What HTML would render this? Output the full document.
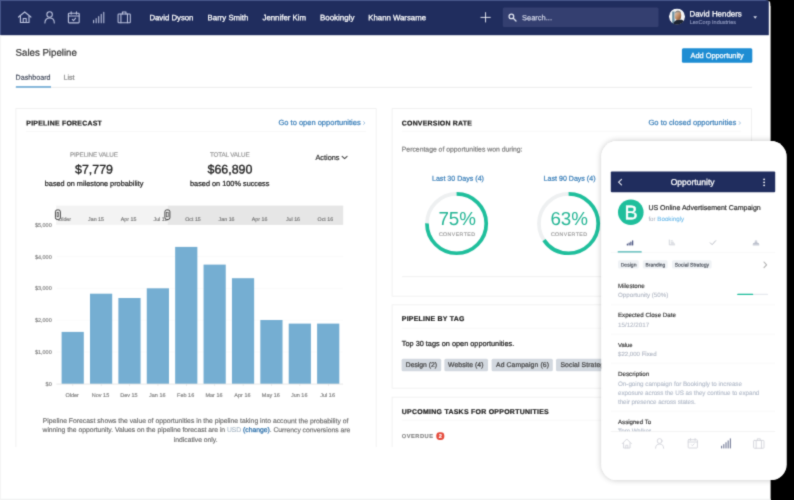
<!DOCTYPE html>
<html lang="en">
<head>
<meta charset="utf-8">
<title>Sales Pipeline</title>
<style>
html,body{margin:0;padding:0;background:#000;}
body{width:794px;height:500px;overflow:hidden;}
svg{display:block;font-family:"Liberation Sans",sans-serif;will-change:transform;}
text{white-space:pre;}
</style>
</head>
<body>
<svg width="794" height="500" viewBox="0 0 794 500" text-rendering="geometricPrecision">
<defs>
<clipPath id="cw"><path d="M-12 -12 H770.6 V512 H-12 Z"/></clipPath>
<filter id="soft" filterUnits="userSpaceOnUse" x="-12" y="-12" width="818" height="524" color-interpolation-filters="sRGB"><feConvolveMatrix order="3" kernelMatrix="1 4 1 4 20 4 1 4 1" divisor="40" edgeMode="duplicate" preserveAlpha="true"/></filter>
<clipPath id="cp"><rect x="601.5" y="141.1" width="185" height="339" rx="15.5"/></clipPath>
<clipPath id="av"><circle cx="677" cy="16.6" r="8.1"/></clipPath>
<linearGradient id="face" x1="0" y1="0" x2="1" y2="1"><stop offset="0" stop-color="#e2d8d0"/><stop offset="0.55" stop-color="#c08a62"/><stop offset="1" stop-color="#6b4630"/></linearGradient>
<filter id="sh" x="-20%" y="-20%" width="140%" height="140%"><feGaussianBlur in="SourceAlpha" stdDeviation="3.4"/><feOffset dy="0.3"/><feComponentTransfer><feFuncA type="linear" slope="0.24"/></feComponentTransfer><feMerge><feMergeNode/><feMergeNode in="SourceGraphic"/></feMerge></filter>
</defs>
<g filter="url(#soft)">
<rect x="-12" y="-12" width="818" height="524" fill="#000"/>
<g clip-path="url(#cw)">
<rect x="-12.00" y="-12.00" width="783.00" height="524.00" fill="#fff" />
<rect x="-12.00" y="-12.00" width="780.80" height="47.20" fill="#202d5e" />
<rect x="-12.00" y="-12.00" width="780.80" height="13.00" fill="#47568a" />
<rect x="-12.00" y="-12.00" width="12.90" height="47.20" fill="#4a598c" />
<g transform="translate(17.70 10.05) scale(1.0)" fill="none" stroke="#b9c0dc" stroke-width="1.15" stroke-linecap="round" stroke-linejoin="round" opacity="1"><path d="M0.8 7 L7 1.9 L13.2 7"/><path d="M2.7 6.2 V12.4 H11.3 V6.2"/><path d="M5.5 12.4 V8.4 H8.5 V12.4"/></g>
<g transform="translate(43.96 10.92) scale(0.94)" fill="none" stroke="#b9c0dc" stroke-width="1.155" stroke-linecap="round" stroke-linejoin="round" opacity="1"><circle cx="6" cy="3.8" r="2.9"/><path d="M1 12.8 C1 9.2 3 7.6 6 7.6 C9 7.6 11 9.2 11 12.8"/></g>
<g transform="translate(67.43 10.93) scale(0.98)" fill="none" stroke="#b9c0dc" stroke-width="1.15" stroke-linecap="round" stroke-linejoin="round" opacity="1"><rect x="1" y="2.4" width="11" height="9.8" rx="0.8"/><path d="M1 5.2 H12"/><path d="M3.8 1 V3.2 M9.2 1 V3.2"/><path d="M5 8.6 L6.2 9.8 L8.4 7.4"/></g>
<g transform="translate(92.50 11.39) scale(0.94)" fill="none" stroke="#b9c0dc" stroke-width="1.15" stroke-linecap="round" stroke-linejoin="round" opacity="1"><path d="M1.2 12 V9.6 M3.9 12 V7.6 M6.6 12 V5.4 M9.3 12 V3.2 M12 12 V1"/></g>
<g transform="translate(117.15 10.92) scale(0.94)" fill="none" stroke="#b9c0dc" stroke-width="1.15" stroke-linecap="round" stroke-linejoin="round" opacity="1"><rect x="1" y="3.2" width="13" height="9.4" rx="0.8"/><path d="M4 3.2 V12.6 M11 3.2 V12.6"/><path d="M5.6 3.2 V1.2 H9.4 V3.2"/></g>
<text x="149.40" y="20.25" transform="rotate(0.03 149.4 20.2)" font-size="7.78" fill="#fff" stroke="#fff" stroke-width="0.25">David Dyson</text>
<text x="207.60" y="20.25" transform="rotate(0.03 207.6 20.2)" font-size="7.81" fill="#fff" stroke="#fff" stroke-width="0.25">Barry Smith</text>
<text x="262.50" y="20.25" transform="rotate(0.03 262.5 20.2)" font-size="7.83" fill="#fff" stroke="#fff" stroke-width="0.25">Jennifer Kim</text>
<text x="320.00" y="20.25" transform="rotate(0.03 320.0 20.2)" font-size="7.93" fill="#fff" stroke="#fff" stroke-width="0.25">Bookingly</text>
<text x="368.30" y="20.25" transform="rotate(0.03 368.3 20.2)" font-size="7.79" fill="#fff" stroke="#fff" stroke-width="0.25">Khann Warsame</text>
<rect x="480.50" y="16.90" width="10.20" height="0.90" fill="#eef0f7" />
<rect x="485.15" y="12.20" width="0.90" height="10.20" fill="#eef0f7" />
<rect x="502.80" y="7.60" width="155.70" height="19.30" rx="1.5" fill="#343f70" />
<g fill="none" stroke="#dfe3f0" stroke-width="1.3" stroke-linecap="round"><circle cx="511.4" cy="16.4" r="2.3"/><path d="M513.3 18.3 L516 21"/></g>
<text x="522.00" y="20.35" transform="rotate(0.03 522.0 20.4)" font-size="7.50" fill="#d3d7e8" stroke="#d3d7e8" stroke-width="0.2">Search...</text>
<g clip-path="url(#av)"><circle cx="677" cy="16.6" r="8.1" fill="#f3f4f6"/><rect x="672.2" y="11.5" width="2.4" height="14" fill="#3f6f86" opacity="0.75"/><ellipse cx="679.4" cy="24.6" rx="6.2" ry="5" fill="#1d2432"/><ellipse cx="677.9" cy="15.6" rx="3.3" ry="4.6" fill="url(#face)"/><path d="M674.9 13.4 C675.2 9.6 680.8 9.6 681.1 13.4 C680 11.9 676 11.9 674.9 13.4Z" fill="#8a8580"/></g>
<text x="689.50" y="16.40" transform="rotate(0.03 689.5 16.4)" font-size="7.91" fill="#fff" stroke="#fff" stroke-width="0.25">David Henders</text>
<text x="689.70" y="24.00" transform="rotate(0.03 689.7 24.0)" font-size="5.52" fill="#8d97bd" stroke="#8d97bd" stroke-width="0.15">LexCorp Industries</text>
<path d="M753.3 16.2 H757.1 L755.2 18.7 Z" fill="#d3d8e8"/>
<text x="15.60" y="55.70" transform="rotate(0.03 15.6 55.7)" font-size="9.66" fill="#3a3a3a" stroke="#3a3a3a" stroke-width="0.22">Sales Pipeline</text>
<text x="15.60" y="79.70" transform="rotate(0.03 15.6 79.7)" font-size="7.15" fill="#3c4456" stroke="#3c4456" stroke-width="0.15">Dashboard</text>
<text x="63.50" y="79.70" transform="rotate(0.03 63.5 79.7)" font-size="7.07" fill="#8a8a8a" stroke="#8a8a8a" stroke-width="0.22">List</text>
<rect x="15.40" y="86.90" width="736.60" height="0.65" fill="#e3e3e3" />
<rect x="15.90" y="86.35" width="35.10" height="1.20" fill="#3f8fca" />
<rect x="681.90" y="48.20" width="70.40" height="14.60" rx="1.5" fill="#1e8dd3" />
<text x="690.50" y="58.00" transform="rotate(0.03 690.5 58.0)" font-size="7.38" fill="#fff" stroke="#fff" stroke-width="0.25">Add Opportunity</text>
<rect x="15.9" y="108.6" width="360.3" height="361.4" fill="#fff" stroke="#eeeeee" stroke-width="0.8"/>
<text x="26.30" y="125.40" transform="rotate(0.03 26.3 125.4)" font-size="6.95" fill="#222" font-weight="700" letter-spacing="0.24" stroke="#222" stroke-width="0.22">PIPELINE FORECAST</text>
<text x="278.50" y="125.00" transform="rotate(0.03 278.5 125.0)" font-size="7.50" fill="#3a7fb9" stroke="#3a7fb9" stroke-width="0.22">Go to open opportunities</text>
<path d="M363.6 121.6 L364.9 123 L363.6 124.4" fill="none" stroke="#8fb6d8" stroke-width="0.8" stroke-linecap="round" stroke-linejoin="round"/>
<rect x="26.00" y="131.40" width="340.00" height="0.60" fill="#f3f3f3" />
<text x="70.00" y="156.70" transform="rotate(0.03 70.0 156.7)" font-size="6.30" fill="#929292" letter-spacing="-0.18" stroke="#929292" stroke-width="0.15">PIPELINE VALUE</text>
<text x="75.00" y="173.60" transform="rotate(0.03 75.0 173.6)" font-size="12.42" fill="#222" stroke="#222" stroke-width="0.32">$7,779</text>
<text x="44.80" y="186.00" transform="rotate(0.03 44.8 186.0)" font-size="7.31" fill="#222" stroke="#222" stroke-width="0.22">based on milestone probability</text>
<text x="210.00" y="156.70" transform="rotate(0.03 210.0 156.7)" font-size="6.30" fill="#929292" letter-spacing="-0.18" stroke="#929292" stroke-width="0.15">TOTAL VALUE</text>
<text x="207.50" y="173.60" transform="rotate(0.03 207.5 173.6)" font-size="12.45" fill="#222" stroke="#222" stroke-width="0.32">$66,890</text>
<text x="190.00" y="186.00" transform="rotate(0.03 190.0 186.0)" font-size="7.33" fill="#222" stroke="#222" stroke-width="0.22">based on 100% success</text>
<text x="315.40" y="160.00" transform="rotate(0.03 315.4 160.0)" font-size="7.35" fill="#333" stroke="#333" stroke-width="0.22">Actions</text>
<path d="M342.1 156.3 L344.6 158.6 L347.1 156.3" fill="none" stroke="#444" stroke-width="1.05" stroke-linecap="round" stroke-linejoin="round"/>
<rect x="56.20" y="205.60" width="111.40" height="19.30" fill="#f3f3f3" />
<rect x="167.60" y="205.60" width="175.60" height="19.30" fill="#e6e6e6" />
<text x="58.12" y="221.00" transform="rotate(0.03 58.1 221.0)" font-size="5.30" fill="#777" stroke="#777" stroke-width="0.15">Older</text>
<text x="88.04" y="221.00" transform="rotate(0.03 88.0 221.0)" font-size="5.30" fill="#777" stroke="#777" stroke-width="0.15">Jan 15</text>
<text x="120.79" y="221.00" transform="rotate(0.03 120.8 221.0)" font-size="5.30" fill="#777" stroke="#777" stroke-width="0.15">Apr 15</text>
<text x="153.53" y="221.00" transform="rotate(0.03 153.5 221.0)" font-size="5.30" fill="#777" stroke="#777" stroke-width="0.15">Jul 15</text>
<text x="185.19" y="221.00" transform="rotate(0.03 185.2 221.0)" font-size="5.30" fill="#777" stroke="#777" stroke-width="0.15">Oct 15</text>
<text x="218.64" y="221.00" transform="rotate(0.03 218.6 221.0)" font-size="5.30" fill="#777" stroke="#777" stroke-width="0.15">Jan 16</text>
<text x="251.79" y="221.00" transform="rotate(0.03 251.8 221.0)" font-size="5.30" fill="#777" stroke="#777" stroke-width="0.15">Apr 16</text>
<text x="285.93" y="221.00" transform="rotate(0.03 285.9 221.0)" font-size="5.30" fill="#777" stroke="#777" stroke-width="0.15">Jul 16</text>
<text x="317.59" y="221.00" transform="rotate(0.03 317.6 221.0)" font-size="5.30" fill="#777" stroke="#777" stroke-width="0.15">Oct 16</text>
<rect x="55.40" y="209.9" width="5" height="9.6" rx="1.8" fill="#e9e9e9" stroke="#333" stroke-width="0.9"/>
<rect x="57.10" y="212.4" width="1.6" height="4.4" fill="none" stroke="#444" stroke-width="0.6"/>
<rect x="164.90" y="209.9" width="5" height="9.6" rx="1.8" fill="#e9e9e9" stroke="#333" stroke-width="0.9"/>
<rect x="166.60" y="212.4" width="1.6" height="4.4" fill="none" stroke="#444" stroke-width="0.6"/>
<text x="45.58" y="386.00" transform="rotate(0.03 45.6 386.0)" font-size="5.50" fill="#808080" stroke="#808080" stroke-width="0.15">$0</text>
<text x="34.88" y="354.00" transform="rotate(0.03 34.9 354.0)" font-size="5.50" fill="#808080" stroke="#808080" stroke-width="0.15">$1,000</text>
<rect x="56.50" y="351.70" width="286.50" height="0.60" fill="#f7f7f7" />
<text x="34.88" y="322.00" transform="rotate(0.03 34.9 322.0)" font-size="5.50" fill="#808080" stroke="#808080" stroke-width="0.15">$2,000</text>
<rect x="56.50" y="319.80" width="286.50" height="0.60" fill="#f7f7f7" />
<text x="34.88" y="290.00" transform="rotate(0.03 34.9 290.0)" font-size="5.50" fill="#808080" stroke="#808080" stroke-width="0.15">$3,000</text>
<rect x="56.50" y="287.90" width="286.50" height="0.60" fill="#f7f7f7" />
<text x="34.88" y="259.00" transform="rotate(0.03 34.9 259.0)" font-size="5.50" fill="#808080" stroke="#808080" stroke-width="0.15">$4,000</text>
<rect x="56.50" y="256.00" width="286.50" height="0.60" fill="#f7f7f7" />
<text x="34.88" y="227.00" transform="rotate(0.03 34.9 227.0)" font-size="5.50" fill="#808080" stroke="#808080" stroke-width="0.15">$5,000</text>
<rect x="61.60" y="331.90" width="22.20" height="52.00" fill="#75aed2" />
<rect x="72.50" y="383.90" width="0.60" height="2.00" fill="#ddd" />
<text x="65.38" y="397.00" transform="rotate(0.03 65.4 397.0)" font-size="5.50" fill="#808080" stroke="#808080" stroke-width="0.15">Older</text>
<rect x="89.99" y="293.70" width="22.20" height="90.20" fill="#75aed2" />
<rect x="100.89" y="383.90" width="0.60" height="2.00" fill="#ddd" />
<text x="91.78" y="397.00" transform="rotate(0.03 91.8 397.0)" font-size="5.50" fill="#808080" stroke="#808080" stroke-width="0.15">Nov 15</text>
<rect x="118.38" y="298.00" width="22.20" height="85.90" fill="#75aed2" />
<rect x="129.28" y="383.90" width="0.60" height="2.00" fill="#ddd" />
<text x="120.17" y="397.00" transform="rotate(0.03 120.2 397.0)" font-size="5.50" fill="#808080" stroke="#808080" stroke-width="0.15">Dev 15</text>
<rect x="146.77" y="288.30" width="22.20" height="95.60" fill="#75aed2" />
<rect x="157.67" y="383.90" width="0.60" height="2.00" fill="#ddd" />
<text x="149.01" y="397.00" transform="rotate(0.03 149.0 397.0)" font-size="5.50" fill="#808080" stroke="#808080" stroke-width="0.15">Jan 16</text>
<rect x="175.16" y="246.90" width="22.20" height="137.00" fill="#75aed2" />
<rect x="186.06" y="383.90" width="0.60" height="2.00" fill="#ddd" />
<text x="177.10" y="397.00" transform="rotate(0.03 177.1 397.0)" font-size="5.50" fill="#808080" stroke="#808080" stroke-width="0.15">Feb 16</text>
<rect x="203.55" y="264.60" width="22.20" height="119.30" fill="#75aed2" />
<rect x="214.45" y="383.90" width="0.60" height="2.00" fill="#ddd" />
<text x="205.49" y="397.00" transform="rotate(0.03 205.5 397.0)" font-size="5.50" fill="#808080" stroke="#808080" stroke-width="0.15">Mar 16</text>
<rect x="231.94" y="278.20" width="22.20" height="105.70" fill="#75aed2" />
<rect x="242.84" y="383.90" width="0.60" height="2.00" fill="#ddd" />
<text x="234.34" y="397.00" transform="rotate(0.03 234.3 397.0)" font-size="5.50" fill="#808080" stroke="#808080" stroke-width="0.15">Apr 16</text>
<rect x="260.33" y="320.00" width="22.20" height="63.90" fill="#75aed2" />
<rect x="271.23" y="383.90" width="0.60" height="2.00" fill="#ddd" />
<text x="261.81" y="397.00" transform="rotate(0.03 261.8 397.0)" font-size="5.50" fill="#808080" stroke="#808080" stroke-width="0.15">May 16</text>
<rect x="288.72" y="323.60" width="22.20" height="60.30" fill="#75aed2" />
<rect x="299.62" y="383.90" width="0.60" height="2.00" fill="#ddd" />
<text x="290.96" y="397.00" transform="rotate(0.03 291.0 397.0)" font-size="5.50" fill="#808080" stroke="#808080" stroke-width="0.15">Jun 16</text>
<rect x="317.11" y="323.60" width="22.20" height="60.30" fill="#75aed2" />
<rect x="328.01" y="383.90" width="0.60" height="2.00" fill="#ddd" />
<text x="320.27" y="397.00" transform="rotate(0.03 320.3 397.0)" font-size="5.50" fill="#808080" stroke="#808080" stroke-width="0.15">Jul 16</text>
<rect x="56.50" y="383.70" width="286.50" height="0.70" fill="#dcdcdc" />
<text x="42.80" y="423.00" transform="rotate(0.03 42.8 423.0)" font-size="6.80" fill="#666" letter-spacing="0.00" stroke="#666" stroke-width="0.12">Pipeline Forecast shows the value of opportunities in the pipeline taking into account the probability of</text>
<text x="42.50" y="432.00" transform="rotate(0.03 42.5 432.0)" font-size="6.80" fill="#666" letter-spacing="-0.03" stroke="#666" stroke-width="0.12">winning the opportunity. Values on the pipeline forecast are in <tspan fill="#a9b8c6" stroke="#a9b8c6">USD</tspan> <tspan fill="#2f72ab" stroke="#2f72ab" stroke-width="0.25">(change)</tspan>. Currency conversions are</text>
<text x="173.80" y="442.00" transform="rotate(0.03 173.8 442.0)" font-size="6.80" fill="#666" letter-spacing="-0.02" stroke="#666" stroke-width="0.12">indicative only.</text>
<rect x="392.1" y="108.6" width="359.4" height="187.6" fill="#fff" stroke="#eeeeee" stroke-width="0.8"/>
<text x="401.80" y="125.40" transform="rotate(0.03 401.8 125.4)" font-size="6.95" fill="#222" font-weight="700" letter-spacing="0.22" stroke="#222" stroke-width="0.22">CONVERSION RATE</text>
<text x="648.50" y="125.00" transform="rotate(0.03 648.5 125.0)" font-size="7.55" fill="#3a7fb9" stroke="#3a7fb9" stroke-width="0.22">Go to closed opportunities</text>
<path d="M739.2 121.6 L740.5 123 L739.2 124.4" fill="none" stroke="#8fb6d8" stroke-width="0.8" stroke-linecap="round" stroke-linejoin="round"/>
<rect x="402.00" y="130.80" width="339.00" height="0.60" fill="#f3f3f3" />
<text x="401.80" y="151.50" transform="rotate(0.03 401.8 151.5)" font-size="6.83" fill="#808080" stroke="#808080" stroke-width="0.22">Percentage of opportunities won during:</text>
<text x="432.00" y="180.70" transform="rotate(0.03 432.0 180.7)" font-size="7.09" fill="#3a7fb9" stroke="#3a7fb9" stroke-width="0.22">Last 30 Days (4)</text>
<text x="543.60" y="180.70" transform="rotate(0.03 543.6 180.7)" font-size="7.09" fill="#3a7fb9" stroke="#3a7fb9" stroke-width="0.22">Last 90 Days (4)</text>
<g transform="translate(456.6 223.6)" fill="none" stroke-width="3.7"><circle r="29.65" stroke="#eef0f1"/><circle r="29.65" stroke="#1fbf9c" stroke-dasharray="139.72 186.30" transform="rotate(-90)"/></g>
<text x="438.39" y="225.00" transform="rotate(0.03 438.4 225.0)" font-size="18.80" fill="#25b595">75%</text>
<text x="438.92" y="236.00" transform="rotate(0.03 438.9 236.0)" font-size="5.20" fill="#999" letter-spacing="0.45" stroke="#999" stroke-width="0.15">CONVERTED</text>
<g transform="translate(568.6 223.6)" fill="none" stroke-width="3.7"><circle r="29.65" stroke="#eef0f1"/><circle r="29.65" stroke="#1fbf9c" stroke-dasharray="122.02 186.30" transform="rotate(-90)"/></g>
<text x="550.39" y="225.00" transform="rotate(0.03 550.4 225.0)" font-size="18.80" fill="#25b595">63%</text>
<text x="550.92" y="236.00" transform="rotate(0.03 550.9 236.0)" font-size="5.20" fill="#999" letter-spacing="0.45" stroke="#999" stroke-width="0.15">CONVERTED</text>
<rect x="402.00" y="276.50" width="339.00" height="0.60" fill="#e8e8e8" />
<rect x="392.1" y="304.8" width="359.4" height="83.39999999999998" fill="#fff" stroke="#eeeeee" stroke-width="0.8"/>
<text x="401.80" y="321.00" transform="rotate(0.03 401.8 321.0)" font-size="6.95" fill="#222" font-weight="700" letter-spacing="0.25" stroke="#222" stroke-width="0.22">PIPELINE BY TAG</text>
<rect x="402.00" y="327.80" width="339.00" height="0.60" fill="#f3f3f3" />
<text x="401.80" y="346.00" transform="rotate(0.03 401.8 346.0)" font-size="7.34" fill="#222" stroke="#222" stroke-width="0.22">Top 30 tags on open opportunities.</text>
<rect x="401.60" y="358.80" width="39.60" height="12.40" rx="1.5" fill="#d2d8df" />
<text x="405.80" y="367.00" transform="rotate(0.03 405.8 367.0)" font-size="6.80" fill="#444" letter-spacing="-0.02" stroke="#444" stroke-width="0.22">Design (2)</text>
<rect x="444.40" y="358.80" width="43.60" height="12.40" rx="1.5" fill="#d2d8df" />
<text x="448.10" y="367.00" transform="rotate(0.03 448.1 367.0)" font-size="6.80" fill="#444" letter-spacing="0.07" stroke="#444" stroke-width="0.22">Website (4)</text>
<rect x="491.60" y="358.80" width="61.20" height="12.40" rx="1.5" fill="#d2d8df" />
<text x="496.00" y="367.00" transform="rotate(0.03 496.0 367.0)" font-size="6.80" fill="#444" letter-spacing="0.11" stroke="#444" stroke-width="0.22">Ad Campaign (6)</text>
<rect x="556.00" y="358.80" width="72.00" height="12.40" rx="1.5" fill="#d2d8df" />
<text x="560.40" y="367.00" transform="rotate(0.03 560.4 367.0)" font-size="6.80" fill="#444" letter-spacing="0.11" stroke="#444" stroke-width="0.22">Social Strategy (3)</text>
<rect x="392.1" y="397.2" width="359.4" height="72.80000000000001" fill="#fff" stroke="#eeeeee" stroke-width="0.8"/>
<text x="401.80" y="414.00" transform="rotate(0.03 401.8 414.0)" font-size="6.95" fill="#222" font-weight="700" letter-spacing="0.28" stroke="#222" stroke-width="0.22">UPCOMING TASKS FOR OPPORTUNITIES</text>
<rect x="402.00" y="419.80" width="339.00" height="0.60" fill="#f3f3f3" />
<text x="401.80" y="438.00" transform="rotate(0.03 401.8 438.0)" font-size="5.70" fill="#888" font-weight="700" letter-spacing="0.50" stroke="#888" stroke-width="0.15">OVERDUE</text>
<rect x="436.30" y="432.20" width="8.00" height="7.80" rx="3.4" fill="#e54b3c" />
<text x="438.64" y="438.00" transform="rotate(0.03 438.6 438.0)" font-size="5.60" fill="#fff" font-weight="700" stroke="#fff" stroke-width="0.15">2</text>
<rect x="1.00" y="447.00" width="768.00" height="51.00" fill="#fff" />
<rect x="-12.00" y="498.70" width="783.00" height="13.30" fill="#f1f3f3" />
<rect x="-12.00" y="35.20" width="13.00" height="476.80" fill="#f4f4f4" />
</g>
<path d="M765.4 -12 H772 V6 H770.6 V5 Q770.6 0 765.6 0 L765.4 -12 Z" fill="#000"/>
<rect x="601.5" y="141.1" width="185" height="339" rx="15.5" fill="#fff" filter="url(#sh)"/>
<g clip-path="url(#cp)">
<rect x="601.00" y="141.00" width="186.00" height="339.20" fill="#fff" />
<rect x="610.80" y="171.50" width="164.40" height="20.80" rx="1" fill="#202d5e" />
<text x="670.63" y="185.00" transform="rotate(0.03 670.6 185.0)" font-size="8.50" fill="#fff" stroke="#fff" stroke-width="0.25">Opportunity</text>
<path d="M621.5 179.4 L618.6 182.1 L621.5 184.8" fill="none" stroke="#e8eaf2" stroke-width="1.15" stroke-linecap="round" stroke-linejoin="round"/>
<circle cx="764.1" cy="179.3" r="0.9" fill="#fff"/>
<circle cx="764.1" cy="182.3" r="0.9" fill="#fff"/>
<circle cx="764.1" cy="185.3" r="0.9" fill="#fff"/>
<circle cx="630.8" cy="212.3" r="12.8" fill="#1fbf9c"/>
<text x="624.46" y="219.30" transform="rotate(0.03 624.5 219.3)" font-size="19.60" fill="#fff" stroke="#fff" stroke-width="0.35">B</text>
<text x="648.40" y="210.00" transform="rotate(0.03 648.4 210.0)" font-size="7.03" fill="#333" stroke="#333" stroke-width="0.22">US Online Advertisement Campaign</text>
<text x="648.40" y="221.00" transform="rotate(0.03 648.4 221.0)" font-size="6.20" fill="#a9b1bf">for <tspan fill="#74bdea" stroke="#74bdea" stroke-width="0.12">Bookingly</tspan></text>
<g transform="translate(626.40 239.45) scale(0.9)" fill="none" stroke="#2b376b" stroke-width="1.15" stroke-linecap="round" stroke-linejoin="round" opacity="1"><path d="M1 6.2 V5 M3 6.2 V4 M5 6.2 V2.8 M7 6.2 V1.4"/></g>
<g transform="translate(668.40 239.25) scale(0.9)" fill="none" stroke="#c9ccd4" stroke-width="0.9" stroke-linecap="round" stroke-linejoin="round" opacity="1"><path d="M1 0.8 V6.2 H7 M3 1.8 H4.4 M3 3.4 H5.6 M3 5 H6.6"/></g>
<g transform="translate(709.40 239.45) scale(0.9)" fill="none" stroke="#b9bcc4" stroke-width="1.1" stroke-linecap="round" stroke-linejoin="round" opacity="1"><path d="M1 3.8 L3 5.8 L7 1.4"/></g>
<g transform="translate(752.40 239.65) scale(0.9)" fill="none" stroke="#b3b8c6" stroke-width="1.1" stroke-linecap="round" stroke-linejoin="round" opacity="1"><path d="M0.8 5.8 H7.2 M1.2 4.4 H6.8 M2.8 3 H5.2 M3.2 1.6 H4.8"/></g>
<rect x="610.80" y="252.00" width="164.40" height="0.60" fill="#f6f6f6" />
<rect x="617.60" y="251.20" width="24.20" height="1.40" rx="0.6" fill="#48b4b2" />
<rect x="618.00" y="260.30" width="20.80" height="8.10" rx="1.5" fill="#eff2f5" />
<text x="620.70" y="266.40" transform="rotate(0.03 620.7 266.4)" font-size="5.08" fill="#555a64" stroke="#555a64" stroke-width="0.2">Design</text>
<rect x="642.80" y="260.30" width="24.80" height="8.10" rx="1.5" fill="#eff2f5" />
<text x="645.50" y="266.40" transform="rotate(0.03 645.5 266.4)" font-size="4.95" fill="#555a64" stroke="#555a64" stroke-width="0.2">Branding</text>
<rect x="672.00" y="260.30" width="39.60" height="8.10" rx="1.5" fill="#eff2f5" />
<text x="674.70" y="266.40" transform="rotate(0.03 674.7 266.4)" font-size="5.14" fill="#555a64" stroke="#555a64" stroke-width="0.2">Social Strategy</text>
<path d="M764 262 L766.6 264.8 L764 267.6" fill="none" stroke="#b0b0b0" stroke-width="1.1" stroke-linecap="round" stroke-linejoin="round"/>
<text x="618.00" y="288.00" transform="rotate(0.03 618.0 288.0)" font-size="6.22" fill="#333" stroke="#333" stroke-width="0.15">Milestone</text>
<text x="618.00" y="297.00" transform="rotate(0.03 618.0 297.0)" font-size="6.21" fill="#b2b8c4" stroke="#b2b8c4" stroke-width="0.12">Opportunity (50%)</text>
<rect x="737.20" y="293.80" width="30.80" height="1.20" rx="0.6" fill="#e6e9ee" />
<rect x="737.20" y="293.80" width="16.00" height="1.20" rx="0.6" fill="#1fbf9c" />
<rect x="610.80" y="304.60" width="164.40" height="0.60" fill="#f5f5f6" />
<text x="618.00" y="317.00" transform="rotate(0.03 618.0 317.0)" font-size="6.17" fill="#333" stroke="#333" stroke-width="0.15">Expected Close Date</text>
<text x="618.00" y="327.00" transform="rotate(0.03 618.0 327.0)" font-size="6.23" fill="#b2b8c4" stroke="#b2b8c4" stroke-width="0.12">15/12/2017</text>
<rect x="610.80" y="333.80" width="164.40" height="0.60" fill="#f5f5f6" />
<text x="618.00" y="347.00" transform="rotate(0.03 618.0 347.0)" font-size="5.88" fill="#333" stroke="#333" stroke-width="0.15">Value</text>
<text x="618.00" y="356.00" transform="rotate(0.03 618.0 356.0)" font-size="6.09" fill="#b2b8c4" stroke="#b2b8c4" stroke-width="0.12">$22,000 Fixed</text>
<rect x="610.80" y="362.80" width="164.40" height="0.60" fill="#f5f5f6" />
<text x="618.00" y="376.00" transform="rotate(0.03 618.0 376.0)" font-size="6.24" fill="#333" stroke="#333" stroke-width="0.15">Description</text>
<text x="618.00" y="386.00" transform="rotate(0.03 618.0 386.0)" font-size="6.30" fill="#b4bcca" letter-spacing="-0.04" stroke="#b4bcca" stroke-width="0.12">On-going campaign for Bookingly to increase</text>
<text x="618.00" y="395.00" transform="rotate(0.03 618.0 395.0)" font-size="6.30" fill="#b4bcca" letter-spacing="-0.06" stroke="#b4bcca" stroke-width="0.12">exposure across the US as they continue to expand</text>
<text x="618.00" y="404.00" transform="rotate(0.03 618.0 404.0)" font-size="6.30" fill="#b4bcca" letter-spacing="-0.10" stroke="#b4bcca" stroke-width="0.12">their presence across states.</text>
<rect x="610.80" y="410.80" width="164.40" height="0.60" fill="#f5f5f6" />
<text x="618.00" y="424.00" transform="rotate(0.03 618.0 424.0)" font-size="6.11" fill="#333" stroke="#333" stroke-width="0.15">Assigned To</text>
<text x="618.00" y="433.00" transform="rotate(0.03 618.0 433.0)" font-size="6.30" fill="#b0b8c6" stroke="#b0b8c6" stroke-width="0.12">Tom Walker</text>
<rect x="610.80" y="431.60" width="164.40" height="24.40" fill="#fff" />
<rect x="610.80" y="431.40" width="164.40" height="0.60" fill="#ededed" />
<g transform="translate(621.05 437.65) scale(1.15)" fill="none" stroke="#d3d5db" stroke-width="0.8" stroke-linecap="round" stroke-linejoin="round" opacity="1"><path d="M1 5.2 L5 1.2 L9 5.2"/><path d="M2.2 4.6 V9 H7.8 V4.6"/><path d="M4.1 9 V6.6 H5.9 V9"/></g>
<g transform="translate(654.43 437.65) scale(1.15)" fill="none" stroke="#d3d5db" stroke-width="0.8" stroke-linecap="round" stroke-linejoin="round" opacity="1"><circle cx="4.5" cy="2.9" r="2.1"/><path d="M1 9.2 C1 6.6 2.4 5.6 4.5 5.6 C6.6 5.6 8 6.6 8 9.2"/></g>
<g transform="translate(687.05 437.65) scale(1.15)" fill="none" stroke="#d3d5db" stroke-width="0.8" stroke-linecap="round" stroke-linejoin="round" opacity="1"><rect x="1" y="1.8" width="8" height="7.2" rx="0.6"/><path d="M1 3.8 H9"/><path d="M3 0.8 V2.4 M7 0.8 V2.4"/><path d="M3.8 6.2 L4.6 7 L6.2 5.4"/></g>
<g transform="translate(720.25 437.65) scale(1.15)" fill="none" stroke="#626a8a" stroke-width="0.85" stroke-linecap="round" stroke-linejoin="round" opacity="1"><path d="M1.2 9 V7.4 M3.1 9 V6 M5 9 V4.4 M6.9 9 V2.8 M8.8 9 V1"/></g>
<g transform="translate(752.47 437.65) scale(1.15)" fill="none" stroke="#d3d5db" stroke-width="0.8" stroke-linecap="round" stroke-linejoin="round" opacity="1"><rect x="1" y="2.4" width="9" height="6.8" rx="0.6"/><path d="M3.2 2.4 V9.2 M7.8 2.4 V9.2"/><path d="M4.2 2.4 V1 H6.8 V2.4"/></g>
</g>
</g>
</svg>
</body>
</html>
